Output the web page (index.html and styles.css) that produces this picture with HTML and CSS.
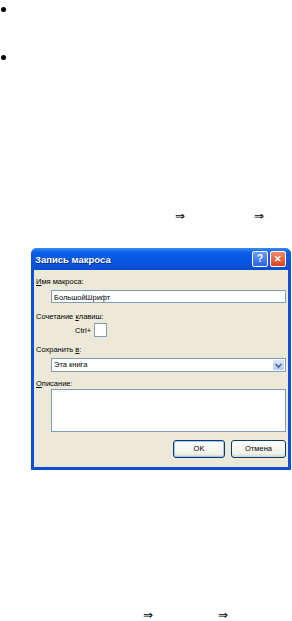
FILE: index.html
```html
<!DOCTYPE html>
<html>
<head>
    <title>Запись макроса</title>
    <link rel="stylesheet" href="styles.css">
</head>
<body>

<ul class="notes">
    <li></li>
    <li></li>
</ul>

<p class="path path-top"><span class="arr">&rArr;</span><span class="arr arr2">&rArr;</span></p>

<div class="dialog">
    <div class="titlebar">
        <span class="title">Запись макроса</span>
        <span class="tbtn help">?</span>
        <span class="tbtn close">&#x2715;</span>
    </div>
    <div class="body">
        <div class="lbl lbl-first"><u>И</u>мя макроса:</div>
        <div class="field">БольшойШрифт</div>

        <div class="lbl lbl-keys">Сочетание <u>к</u>лавиш:</div>
        <div class="keys"><span>Ctrl+</span><span class="keybox"></span></div>

        <div class="lbl lbl-save">Сохранить <u>в</u>:</div>
        <div class="field select">Эта книга<span class="drop"><svg width="9" height="9" viewBox="0 0 9 9"><path d="M1.5 3 L4.5 6 L7.5 3" fill="none" stroke="#4d6185" stroke-width="1.6"/></svg></span></div>

        <div class="lbl lbl-desc"><u>О</u>писание:</div>
        <div class="field memo"></div>

        <div class="buttons">
            <span class="btn ok">OK</span>
            <span class="btn">Отмена</span>
        </div>
    </div>
</div>

<p class="path path-bottom"><span class="arr">&rArr;</span><span class="arr arr3">&rArr;</span></p>

</body>
</html>
```

FILE: styles.css
```css
BODY {
    margin : 0;
    background : #fff;
    font-family : "Liberation Sans", Arial, sans-serif;
    color : #000;
}

.notes {
    list-style : none;
    margin : 0;
    padding : 7px 0 0 1px;
}
.notes LI {
    height : 48px;
}
.notes LI::before {
    content : "";
    display : block;
    width : 5px;
    height : 5px;
    border-radius : 50%;
    background : #000;
}

.path {
    margin : 0;
    height : 12px;
    font-size : 12px;
    line-height : 12px;
    display : flex;
}
.path-top {
    margin-top : 107px;
    padding-left : 175px;
}
.arr2 {
    margin-left : 69px;
}
.path-bottom {
    margin-top : 139px;
    padding-left : 143px;
}
.arr3 {
    margin-left : 65px;
}

/* dialog */
.dialog {
    margin : 26px 0 0 31px;
    width : 260px;
    background : #0b4fd6;
    border-radius : 6px 6px 0 0;
    padding : 0 3px 3px 3px;
    box-sizing : border-box;
}
.titlebar {
    height : 22px;
    display : flex;
    align-items : center;
    margin : 0 -3px;
    padding : 0 5px 0 4px;
    border-radius : 6px 6px 0 0;
    background : linear-gradient(#3b8cf5 0%, #0a5fe8 20%, #0754e0 60%, #0a4fd0 100%);
}
.title {
    flex : 1;
    color : #fff;
    font-size : 9.5px;
    font-weight : bold;
    text-shadow : 1px 1px 0 #0a2a80;
}
.tbtn {
    width : 14px;
    height : 14px;
    border : 1px solid #fff;
    border-radius : 2px;
    color : #fff;
    font-size : 10px;
    font-weight : bold;
    line-height : 14px;
    text-align : center;
}
.help {
    background : linear-gradient(#6f9cf7, #2c63e0);
    margin-right : 2px;
}
.close {
    background : linear-gradient(#f08a6a, #d9441c);
    font-size : 9px;
}

.body {
    background : #ece9d8;
    height : 191px;
    padding : 6px 2px 0 2px;
    font-size : 7.5px;
}
.lbl {
    height : 10px;
    line-height : 10px;
}
.field {
    margin-left : 15px;
    height : 13px;
    line-height : 13px;
    border : 1px solid #7f9db9;
    background : #fff;
    padding-left : 2px;
    box-sizing : border-box;
}
.lbl-first {
    margin-top : 1px;
}
.lbl + .field {
    margin-top : 3px;
}
.lbl-keys {
    margin-top : 9px;
}
.keys {
    display : flex;
    align-items : center;
    margin : 1px 0 0 39px;
    height : 14px;
}
.keybox {
    width : 13px;
    height : 14px;
    border : 1px solid #7f9db9;
    background : #fff;
    margin-left : 3px;
    box-sizing : border-box;
}
.lbl-save {
    margin-top : 8px;
}
.select {
    display : flex;
    justify-content : space-between;
    height : 14px;
    line-height : 12px;
    padding-right : 1px;
}
.drop {
    width : 11px;
    height : 10px;
    margin-top : 1px;
    background : linear-gradient(#dbe6fb, #b5cbf5);
    border-radius : 1px;
    display : flex;
    align-items : center;
    justify-content : center;
}
.lbl-desc {
    margin-top : 7px;
}
.lbl + .memo {
    margin-top : 0;
    height : 43px;
}
.buttons {
    display : flex;
    justify-content : flex-end;
    margin-top : 8px;
    gap : 6px;
}
.btn {
    width : 55px;
    height : 18px;
    line-height : 16px;
    box-sizing : border-box;
    border : 1px solid #003c74;
    border-radius : 3px;
    background : linear-gradient(#fff, #f0f0ea 80%, #d6d0c5);
    text-align : center;
}
.ok {
    width : 52px;
    box-shadow : inset 0 0 0 1px #a6c4f0;
}
```
